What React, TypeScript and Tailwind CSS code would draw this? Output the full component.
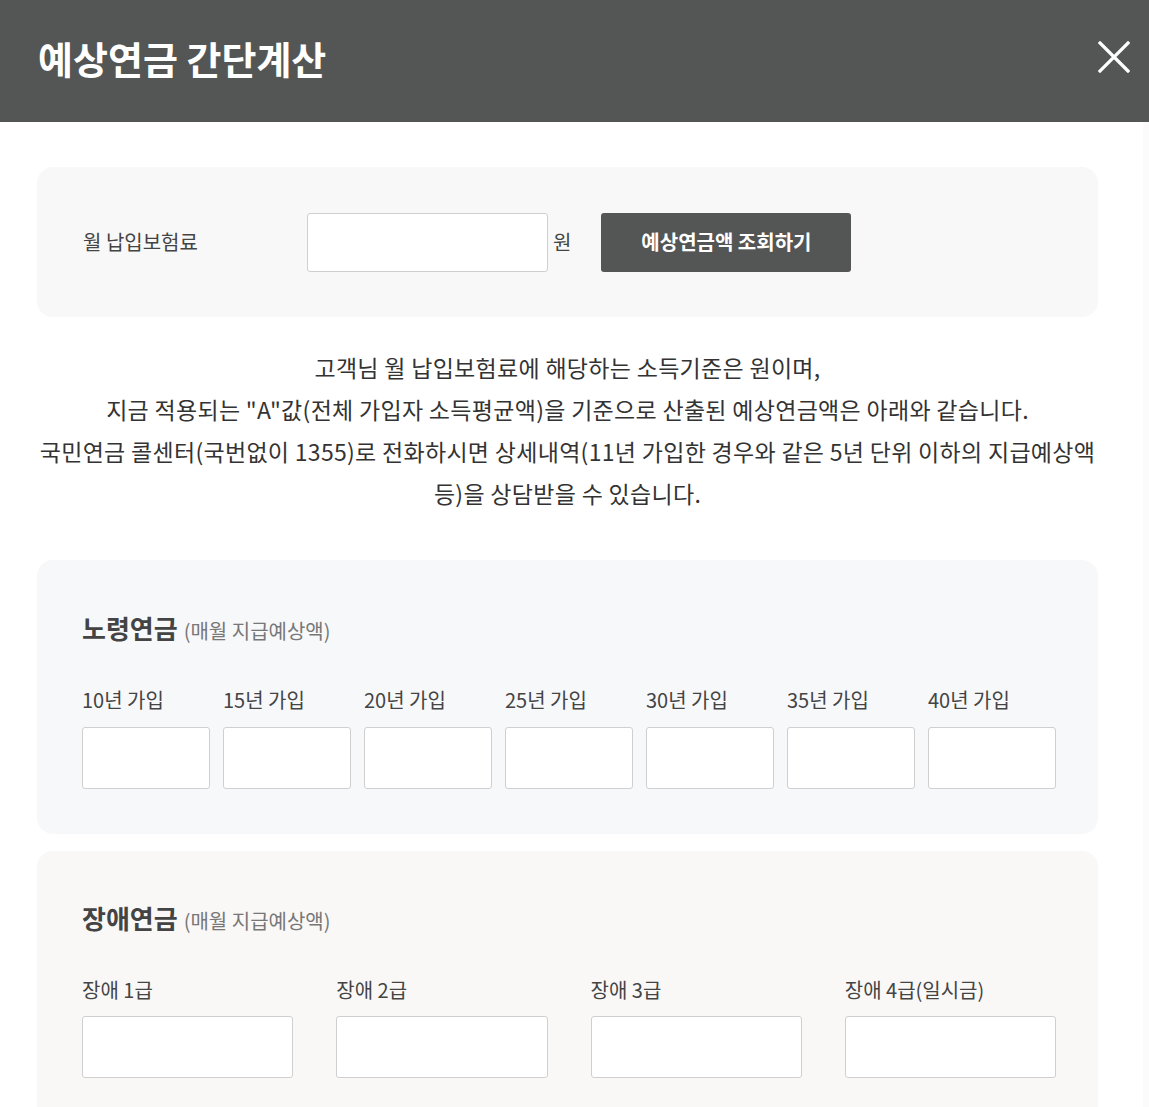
import React from "react";

const font = { fontFamily: '"Noto Sans CJK KR", "Noto Sans", sans-serif' };

const oldAge = ["10년 가입", "15년 가입", "20년 가입", "25년 가입", "30년 가입", "35년 가입", "40년 가입"];
const disability = ["장애 1급", "장애 2급", "장애 3급", "장애 4급(일시금)"];

const Field: React.FC<{ label: string; gap: string }> = ({ label, gap }) => (
  <div className="flex flex-col">
    <span className="text-[20px] leading-[28px] text-[#444]">{label}</span>
    <input
      type="text"
      className={`${gap} h-[62px] w-full rounded-[3px] border border-[#cfcfcf] bg-white outline-none`}
    />
  </div>
);

const SectionTitle: React.FC<{ title: string }> = ({ title }) => (
  <h3 className="flex h-[40px] items-baseline leading-[40px]">
    <span className="text-[26px] font-bold text-[#444]">{title}</span>
    <span className="ml-[6px] text-[20px] text-[#777]">(매월 지급예상액)</span>
  </h3>
);

export default function App() {
  return (
    <div className="w-[1149px] min-h-[1107px] bg-white" style={font}>
      <header className="flex h-[122px] items-center justify-between bg-[#545655] pb-[8px] pl-[38px] pr-[19px]">
        <h1 className="text-[38px] font-bold text-white">예상연금 간단계산</h1>
        <svg width="32" height="32" viewBox="0 0 32 32" fill="none" stroke="white" strokeWidth="3.2" strokeLinecap="square">
          <path d="M2 2 L30 30 M30 2 L2 30" />
        </svg>
      </header>

      <div className="flex">
        <main className="flex-1 pl-[37px] pr-[45px] pt-[45px] pb-[40px]">
          {/* 입력 */}
          <section className="flex h-[150px] items-center rounded-[16px] bg-[#f8f8f8] pl-[46px]">
            <label className="w-[224px] text-[20px] text-[#444]">월 납입보험료</label>
            <input
              type="text"
              className="h-[59px] w-[241px] rounded-[3px] border border-[#cfcfcf] bg-white outline-none"
            />
            <span className="ml-[5px] text-[20px] text-[#444]">원</span>
            <button className="ml-[30px] h-[59px] w-[250px] rounded-[3px] bg-[#545655] text-[20px] font-bold text-white">
              예상연금액 조회하기
            </button>
          </section>

          {/* 안내 */}
          <p className="mt-[29px] text-center text-[23px] leading-[42px] tracking-[0.3px] text-[#333]">
            고객님 월 납입보험료에 해당하는 소득기준은 원이며,
            <br />
            지금 적용되는 "A"값(전체 가입자 소득평균액)을 기준으로 산출된 예상연금액은 아래와 같습니다.
            <br />
            국민연금 콜센터(국번없이 1355)로 전화하시면 상세내역(11년 가입한 경우와 같은 5년 단위 이하의 지급예상액 등)을 상담받을 수 있습니다.
          </p>

          {/* 노령연금 */}
          <section className="mt-[46px] rounded-[16px] bg-[#f7f8fa] pl-[45px] pr-[42px] pt-[48px] pb-[45px]">
            <SectionTitle title="노령연금" />
            <div className="mt-[38px] grid grid-cols-7 gap-[13px]">
              {oldAge.map((l) => (
                <Field key={l} label={l} gap="mt-[13px]" />
              ))}
            </div>
          </section>

          {/* 장애연금 */}
          <section className="mt-[17px] rounded-[16px] bg-[#f9f8f6] pl-[45px] pr-[42px] pt-[47px] pb-[45px]">
            <SectionTitle title="장애연금" />
            <div className="mt-[38px] grid grid-cols-4 gap-x-[43px]">
              {disability.map((l) => (
                <Field key={l} label={l} gap="mt-[12px]" />
              ))}
            </div>
          </section>
        </main>
        <div className="w-[6px] bg-[#fbfbfb]" />
      </div>
    </div>
  );
}
